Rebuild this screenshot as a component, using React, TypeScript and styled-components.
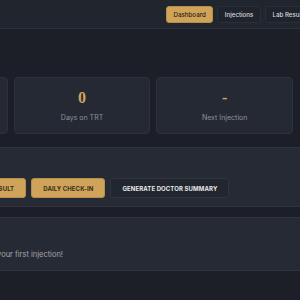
import React from "react";
import styled, { createGlobalStyle } from "styled-components";

const GlobalStyle = createGlobalStyle`
  html, body {
    margin: 0;
    padding: 0;
    background: #1c1f27;
    overflow: hidden;
  }
  body {
    font-family: "Inter", "Lato", sans-serif;
    color: #d8dbe1;
  }
`;

const Viewport = styled.div`
  display: flex;
  justify-content: center;
  width: 100%;
  min-height: 300px;
`;

const Shell = styled.div`
  flex: 0 0 600px;
  width: 600px;
  display: flex;
  flex-direction: column;
`;

const Header = styled.header`
  height: 28px;
  background: #21252e;
  border-bottom: 1px solid #2c303a;
  display: flex;
  align-items: center;
  padding: 0 14px 0 21px;
`;

const Brand = styled.div`
  flex: 0 0 295px;
  font-size: 9px;
  font-weight: 700;
  color: #cfa55a;
`;

const Nav = styled.nav`
  display: flex;
  gap: 4px;
  align-items: center;
`;

const NavButton = styled.button<{ $active?: boolean }>`
  height: 17px;
  padding: 0 6.5px;
  border-radius: 3px;
  font-family: inherit;
  font-size: 6.2px;
  font-weight: 500;
  cursor: pointer;
  white-space: nowrap;
  background: ${(p) => (p.$active ? "#cfa45a" : "#1f232c")};
  color: ${(p) => (p.$active ? "#2a2214" : "#d6d9df")};
  border: 1px solid ${(p) => (p.$active ? "#b68f49" : "#2a2e38")};
`;

const Main = styled.main`
  padding: 48px 14px 0 21px;
  display: flex;
  flex-direction: column;
`;

const StatsGrid = styled.section`
  display: grid;
  grid-template-columns: repeat(3, 1fr);
  gap: 6px;
  width: 422px;
`;

const StatCard = styled.div`
  background: #252933;
  border: 1px solid #2c313b;
  border-radius: 4px;
  padding: 10px 8px;
  display: flex;
  flex-direction: column;
  align-items: center;
  gap: 4px;
`;

const StatValue = styled.div`
  font-family: "Liberation Serif", "DejaVu Serif", serif;
  font-size: 16px;
  line-height: 20px;
  font-weight: 700;
  color: #cfa55a;
`;

const StatLabel = styled.div`
  font-size: 7px;
  line-height: 11px;
  color: #8c919c;
`;

const Panel = styled.section<{ $gapTop: number }>`
  margin-top: ${(p) => p.$gapTop}px;
  background: #262a34;
  border: 1px solid #2e323c;
  border-radius: 5px;
  padding: 12px 12px 8px;
  display: flex;
  flex-direction: column;
  gap: 6px;
`;

const PanelTitle = styled.h2`
  margin: 0;
  font-size: 9px;
  line-height: 12px;
  font-weight: 600;
  color: #e2e4e8;
`;

const ActionRow = styled.div`
  display: flex;
  gap: 5px;
`;

const ActionButton = styled.button<{ $variant?: "gold" | "dark" }>`
  height: 20px;
  padding: 0 11px;
  border-radius: 3px;
  font-family: inherit;
  font-size: 6px;
  font-weight: 700;
  letter-spacing: 0.1px;
  text-transform: uppercase;
  white-space: nowrap;
  cursor: pointer;
  background: ${(p) => (p.$variant === "dark" ? "#22262f" : "#cfa45a")};
  color: ${(p) => (p.$variant === "dark" ? "#e8e9ec" : "#3a2e18")};
  border: 1px solid ${(p) => (p.$variant === "dark" ? "#30343e" : "#b68f49")};
`;

const EmptyText = styled.p`
  margin: 0;
  font-size: 7.5px;
  line-height: 14px;
  color: #a3a6ad;
`;

const stats = [
  { value: "0", label: "Total Injections" },
  { value: "0", label: "Days on TRT" },
  { value: "-", label: "Next Injection" },
];

export default function App() {
  return (
    <>
      <GlobalStyle />
      <Viewport>
        <Shell>
          <Header>
            <Brand>TRT Tracker</Brand>
            <Nav>
              <NavButton $active>Dashboard</NavButton>
              <NavButton>Injections</NavButton>
              <NavButton>Lab Results</NavButton>
              <NavButton>Check-ins</NavButton>
            </Nav>
          </Header>
          <Main>
            <StatsGrid>
              {stats.map((s) => (
                <StatCard key={s.label}>
                  <StatValue>{s.value}</StatValue>
                  <StatLabel>{s.label}</StatLabel>
                </StatCard>
              ))}
            </StatsGrid>
            <Panel $gapTop={13}>
              <PanelTitle>Quick Actions</PanelTitle>
              <ActionRow>
                <ActionButton>Log a Dose</ActionButton>
                <ActionButton>Add Lab Result</ActionButton>
                <ActionButton>Daily Check-In</ActionButton>
                <ActionButton $variant="dark">Generate Doctor Summary</ActionButton>
              </ActionRow>
            </Panel>
            <Panel $gapTop={10}>
              <PanelTitle>Recent Injections</PanelTitle>
              <EmptyText>No injections recorded yet. Log your first injection!</EmptyText>
            </Panel>
          </Main>
        </Shell>
      </Viewport>
    </>
  );
}
